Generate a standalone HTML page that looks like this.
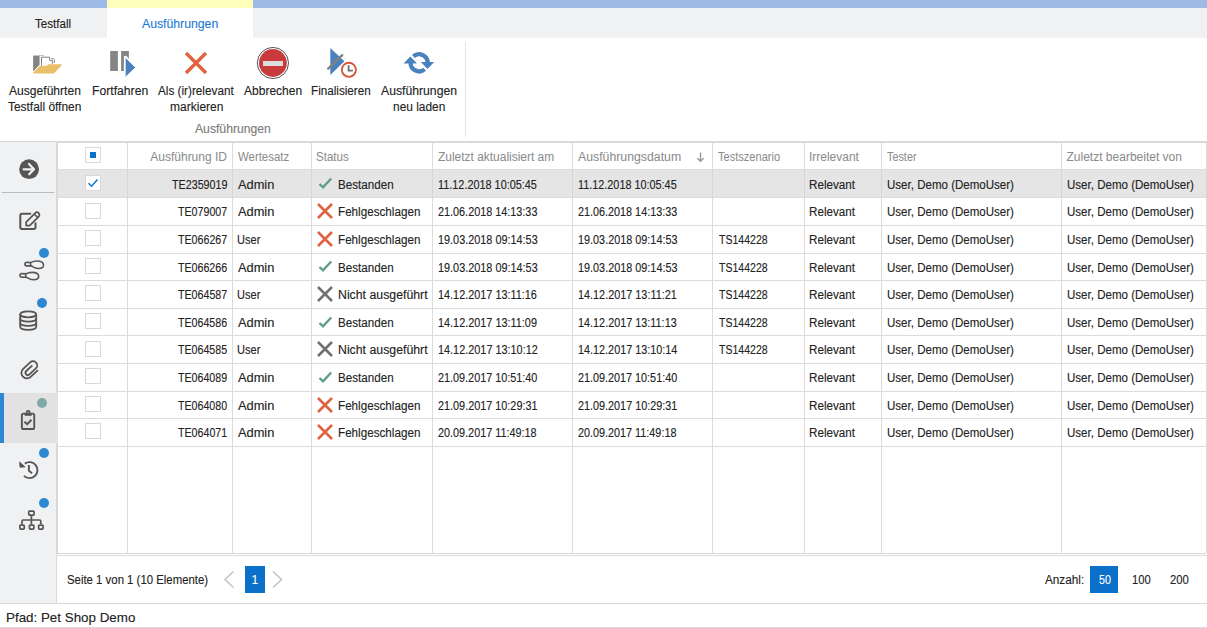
<!DOCTYPE html>
<html><head><meta charset="utf-8"><style>
html,body{margin:0;padding:0;}
body{width:1207px;height:628px;overflow:hidden;position:relative;background:#fff;font-family:"Liberation Sans",sans-serif;}
body>div{position:absolute;box-sizing:content-box;}
.t{white-space:pre;line-height:16px;transform-origin:0 0;-webkit-text-stroke:0.12px currentColor;}
</style></head><body>
<div style="left:0px;top:0px;width:1207px;height:8px;background:#9EBAE6;"></div>
<div style="left:107px;top:0px;width:146px;height:8px;background:#FFFFBB;"></div>
<div style="left:0px;top:8px;width:1207px;height:30px;background:#F0F1F3;"></div>
<div style="left:107px;top:8px;width:146px;height:30px;background:#FFFFFF;"></div>
<div class="t" style="left:35.04px;top:15.84px;font-size:12px;color:#222;transform:scaleX(0.9653);">Testfall</div>
<div class="t" style="left:142.18px;top:15.84px;font-size:12px;color:#1C7CD5;transform:scaleX(1.0200);">Ausführungen</div>
<div style="left:0px;top:141px;width:1207px;height:1px;background:#D9D9D9;"></div>
<div style="left:465px;top:42px;width:1px;height:95px;background:#E3E3E3;"></div>
<div class="t" style="left:9.43px;top:82.84px;font-size:12px;color:#222;transform:scaleX(1.0073);">Ausgeführten</div>
<div class="t" style="left:8.43px;top:98.84px;font-size:12px;color:#222;transform:scaleX(0.9929);">Testfall öffnen</div>
<div class="t" style="left:92.30px;top:82.84px;font-size:12px;color:#222;transform:scaleX(1.0150);">Fortfahren</div>
<div class="t" style="left:158.28px;top:82.84px;font-size:12px;color:#222;transform:scaleX(0.9788);">Als (ir)relevant</div>
<div class="t" style="left:170.10px;top:98.84px;font-size:12px;color:#222;">markieren</div>
<div class="t" style="left:244.08px;top:82.84px;font-size:12px;color:#222;">Abbrechen</div>
<div class="t" style="left:311.44px;top:82.84px;font-size:12px;color:#222;transform:scaleX(0.9732);">Finalisieren</div>
<div class="t" style="left:381.18px;top:82.84px;font-size:12px;color:#222;transform:scaleX(1.0173);">Ausführungen</div>
<div class="t" style="left:392.81px;top:98.84px;font-size:12px;color:#222;transform:scaleX(0.9933);">neu laden</div>
<div class="t" style="left:195.38px;top:120.84px;font-size:12px;color:#7A7A7A;transform:scaleX(1.0146);">Ausführungen</div>
<svg style="position:absolute;left:30px;top:50px" width="36" height="28" viewBox="0 0 36 28">
<path d="M3.9 5.4 L14.1 5.4 L14.1 6.1 L9.6 6.1 L9.6 14.7 L3.1 21.4 L3.1 6.2 Q3.1 5.4 3.9 5.4 Z" fill="#858585"/>
<path d="M11.5 15.6 L11.5 7.2 L19.6 7.2 L19.6 10.3 L22.3 10.3 L22.3 14" fill="none" stroke="#7A7A7A" stroke-width="0.95"/>
<path d="M21.5 8.3 Q23.6 8.3 24.3 9.9 L24.3 12.9" fill="none" stroke="#7A7A7A" stroke-width="0.95"/>
<path d="M3.1 23.4 L23.9 23.4 L31.9 15 Q32 14.2 31.2 14.2 L18.3 14.2 L16.7 15.8 L10 15.8 L3.1 22.8 Z" fill="#E9BF6A"/>
</svg>
<svg style="position:absolute;left:105px;top:48px" width="36" height="32" viewBox="0 0 36 32">
<rect x="5.2" y="3" width="7.7" height="20" fill="#858585"/>
<path d="M16.1 3 L23.9 3 L23.9 10.7 L21.9 8.2 L18.9 8.0 L18.9 23 L16.1 23 Z" fill="#858585"/>
<path d="M20.1 9 L30.6 19.4 L20.1 29.6 Z" fill="#4A81BF" stroke="#fff" stroke-width="1"/>
</svg>
<svg style="position:absolute;left:182px;top:49px" width="28" height="28" viewBox="0 0 28 28">
<path d="M4 4 L24 24 M24 4 L4 24" stroke="#E0623F" stroke-width="3.4" stroke-linecap="butt"/>
</svg>
<svg style="position:absolute;left:255px;top:45px" width="36" height="36" viewBox="0 0 36 36">
<circle cx="17.9" cy="18" r="15.6" fill="#fff" stroke="#555" stroke-width="1"/>
<circle cx="17.9" cy="18" r="13.9" fill="#C93A3C"/>
<rect x="8" y="16" width="20" height="5" fill="#DCDCDC"/>
</svg>
<svg style="position:absolute;left:325px;top:45px" width="36" height="36" viewBox="0 0 36 36">
<path d="M5.3 3 L19.4 16.3 L5.3 29.9 Z" fill="#4A81BF"/>
<path d="M3.2 23.6 L17.2 10.2" stroke="#838383" stroke-width="2.4" stroke-linecap="round"/>
<circle cx="23.9" cy="24.8" r="7.05" fill="#fff" stroke="#D9583A" stroke-width="1.9"/>
<path d="M23.6 20.2 L23.6 25.6 L27.9 25.6" fill="none" stroke="#707070" stroke-width="1.9"/>
</svg>
<svg style="position:absolute;left:400px;top:48px" width="38" height="30" viewBox="0 0 38 30">
<path d="M13.38 8.45 A8.55 8.55 0 0 1 27.65 14.8" fill="none" stroke="#4A81BF" stroke-width="4.3"/>
<path d="M20.8 14.1 L34.2 14.1 L27.5 21.0 Z" fill="#4A81BF"/>
<path d="M24.71 21.25 A8.55 8.55 0 0 1 10.55 14.8" fill="none" stroke="#4A81BF" stroke-width="4.3"/>
<path d="M3.6 15.5 L17 15.5 L10.3 8.6 Z" fill="#4A81BF"/>
</svg>
<div style="left:0px;top:142px;width:56px;height:461px;background:#F0F1F3;"></div>
<div style="left:56px;top:142px;width:1px;height:461px;background:#DADADA;"></div>
<div style="left:57px;top:142px;width:1px;height:411px;background:#DADADA;"></div>
<div style="left:2px;top:192px;width:52px;height:1px;background:#BBBBBB;"></div>
<div style="left:0px;top:393px;width:58px;height:50px;background:#E2E2E2;"></div>
<div style="left:0px;top:393px;width:4px;height:50px;background:#2D87D3;"></div>
<svg style="position:absolute;left:17px;top:157px" width="24" height="24" viewBox="0 0 24 24">
<circle cx="12.1" cy="12.2" r="9.9" fill="#555555"/>
<path d="M6.6 12.3 L16.6 12.3 M12 7 L17 12.2 L12.2 17.3" fill="none" stroke="#F0F0F0" stroke-width="2.2" stroke-linecap="round" stroke-linejoin="round"/>
</svg>
<svg style="position:absolute;left:12px;top:202px" width="40" height="40" viewBox="0 0 40 40">
<path d="M19.1 11.8 L10 11.8 Q8.3 11.8 8.3 13.5 L8.3 25.3 Q8.3 27 10 27 L21.8 27 Q23.5 27 23.5 25.3 L23.5 20.4" fill="none" stroke="#555555" stroke-width="2"/>
<g transform="translate(21.4,16.4) rotate(-45)">
<path d="M-7.8 -2.5 L5.0 -2.5 A2.5 2.5 0 0 1 5.0 2.5 L-7.8 2.5 L-10.2 0 Z" fill="none" stroke="#555555" stroke-width="1.7" stroke-linejoin="round"/>
<path d="M3.6 -2.5 L3.6 2.5" stroke="#555555" stroke-width="1.5"/>
</g>
</svg>
<svg style="position:absolute;left:12px;top:245px" width="40" height="40" viewBox="0 0 40 40">
<path d="M14.8 17.2 L18.6 17.6 C21 16.4 25 15.8 27.8 16.3 C31.5 17 32.2 19.8 31 22 C29.6 24 25 23.8 22.5 22.6 C21 21.9 19.8 20.9 18.6 20.9 L14.8 20.9 C12.3 20.9 12.3 17.2 14.8 17.2 Z M18.6 17.6 L18.6 20.9" fill="none" stroke="#555555" stroke-width="1.6" stroke-linejoin="round"/>
<g transform="translate(-4.9,11.3)"><path d="M14.8 17.2 L18.6 17.6 C21 16.4 25 15.8 27.8 16.3 C31.5 17 32.2 19.8 31 22 C29.6 24 25 23.8 22.5 22.6 C21 21.9 19.8 20.9 18.6 20.9 L14.8 20.9 C12.3 20.9 12.3 17.2 14.8 17.2 Z M18.6 17.6 L18.6 20.9" fill="none" stroke="#555555" stroke-width="1.6" stroke-linejoin="round"/></g>
</svg>
<svg style="position:absolute;left:16px;top:307px" width="26" height="26" viewBox="0 0 26 26">
<ellipse cx="12.2" cy="7.3" rx="8" ry="3" fill="none" stroke="#555555" stroke-width="1.8"/>
<path d="M4.2 7.3 L4.2 19.8 C4.2 23.8 20.2 23.8 20.2 19.8 L20.2 7.3" fill="none" stroke="#555555" stroke-width="1.8"/>
<path d="M4.2 11.6 C4.2 15.6 20.2 15.6 20.2 11.6 M4.2 15.8 C4.2 19.8 20.2 19.8 20.2 15.8" fill="none" stroke="#555555" stroke-width="1.8"/>
</svg>
<svg style="position:absolute;left:12px;top:350px" width="40" height="40" viewBox="0 0 40 40">
<g transform="translate(17.6,20.05) scale(1.06) translate(-17.3,-19.6) translate(6,8) rotate(-43)">
<path d="M6.0 21.6 L-3.3 21.6 A5.2 5.2 0 0 1 -3.3 11.2 L5.7 11.2 A3.95 3.95 0 0 1 5.7 19.1 L-2.55 19.1 A2.2 2.2 0 0 1 -2.55 14.7 L5.3 14.7" fill="none" stroke="#555555" stroke-width="1.7"/>
</g>
</svg>
<svg style="position:absolute;left:12px;top:400px" width="40" height="40" viewBox="0 0 40 40">
<rect x="9.85" y="13.6" width="12.4" height="15.4" rx="1.6" fill="none" stroke="#555555" stroke-width="1.9"/>
<rect x="12.7" y="13.2" width="7" height="2.6" fill="#555555"/>
<circle cx="16.2" cy="12.5" r="1.6" fill="none" stroke="#555555" stroke-width="1.6"/>
<path d="M12.4 21.7 L15.2 24.2 L19.5 19.7" fill="none" stroke="#555555" stroke-width="2"/>
</svg>
<svg style="position:absolute;left:16px;top:456px" width="28" height="28" viewBox="0 0 28 28">
<path d="M7.94 19.85 A8 8 0 1 0 8.8 7.63" fill="none" stroke="#555555" stroke-width="1.9"/>
<path d="M3.6 6.1 L4 11.2 L9.1 10.9 Z" fill="#555555" stroke="#555555" stroke-width="0.8" stroke-linejoin="round"/>
<path d="M12.9 9 L12.9 14.7 L16.1 17.2" fill="none" stroke="#555555" stroke-width="1.9"/>
</svg>
<svg style="position:absolute;left:16px;top:506px" width="30" height="28" viewBox="0 0 30 28">
<rect x="12.75" y="5.05" width="5.3" height="4.0" rx="0.8" fill="none" stroke="#555555" stroke-width="1.7"/>
<rect x="3.85" y="19.05" width="4.4" height="4.0" rx="0.8" fill="none" stroke="#555555" stroke-width="1.7"/>
<rect x="13.45" y="19.05" width="4.4" height="4.0" rx="0.8" fill="none" stroke="#555555" stroke-width="1.7"/>
<rect x="22.65" y="19.05" width="4.4" height="4.0" rx="0.8" fill="none" stroke="#555555" stroke-width="1.7"/>
<path d="M15.4 9.9 L15.4 17.9 M6 18 L6 15.2 Q6 14 7.2 14 L23.6 14 Q24.8 14 24.8 15.2 L24.8 18" fill="none" stroke="#555555" stroke-width="1.7"/>
</svg>
<div style="left:39px;top:247.5px;width:10px;height:10px;border-radius:5px;background:#2D87D3"></div>
<div style="left:37px;top:298px;width:10px;height:10px;border-radius:5px;background:#2D87D3"></div>
<div style="left:37px;top:398px;width:10px;height:10px;border-radius:5px;background:#7FA9A8"></div>
<div style="left:39px;top:448px;width:10px;height:10px;border-radius:5px;background:#2D87D3"></div>
<div style="left:39px;top:498px;width:10px;height:10px;border-radius:5px;background:#2D87D3"></div>
<div style="left:58px;top:141px;width:1149px;height:2px;background:#D9D9D9;"></div>
<div style="left:58px;top:143px;width:1148px;height:410px;background:#FFFFFF;"></div>
<div style="left:127px;top:143px;width:1px;height:410px;background:#DCDCDC;"></div>
<div style="left:232px;top:143px;width:1px;height:410px;background:#DCDCDC;"></div>
<div style="left:311px;top:143px;width:1px;height:410px;background:#DCDCDC;"></div>
<div style="left:432px;top:143px;width:1px;height:410px;background:#DCDCDC;"></div>
<div style="left:572px;top:143px;width:1px;height:410px;background:#DCDCDC;"></div>
<div style="left:712px;top:143px;width:1px;height:410px;background:#DCDCDC;"></div>
<div style="left:804px;top:143px;width:1px;height:410px;background:#DCDCDC;"></div>
<div style="left:881px;top:143px;width:1px;height:410px;background:#DCDCDC;"></div>
<div style="left:1061px;top:143px;width:1px;height:410px;background:#DCDCDC;"></div>
<div style="left:1206px;top:143px;width:1px;height:410px;background:#DCDCDC;"></div>
<div style="left:58px;top:169px;width:1148px;height:1px;background:#DCDCDC;"></div>
<div style="left:58px;top:170px;width:1148px;height:27px;background:#E5E5E5;"></div>
<div style="left:127px;top:170px;width:1px;height:27px;background:#D6D6D6;"></div>
<div style="left:232px;top:170px;width:1px;height:27px;background:#D6D6D6;"></div>
<div style="left:311px;top:170px;width:1px;height:27px;background:#D6D6D6;"></div>
<div style="left:432px;top:170px;width:1px;height:27px;background:#D6D6D6;"></div>
<div style="left:572px;top:170px;width:1px;height:27px;background:#D6D6D6;"></div>
<div style="left:712px;top:170px;width:1px;height:27px;background:#D6D6D6;"></div>
<div style="left:804px;top:170px;width:1px;height:27px;background:#D6D6D6;"></div>
<div style="left:881px;top:170px;width:1px;height:27px;background:#D6D6D6;"></div>
<div style="left:1061px;top:170px;width:1px;height:27px;background:#D6D6D6;"></div>
<div style="left:1206px;top:170px;width:1px;height:27px;background:#D6D6D6;"></div>
<div style="left:58px;top:197px;width:1148px;height:1px;background:#DCDCDC;"></div>
<div style="left:58px;top:225px;width:1148px;height:1px;background:#DCDCDC;"></div>
<div style="left:58px;top:253px;width:1148px;height:1px;background:#DCDCDC;"></div>
<div style="left:58px;top:280px;width:1148px;height:1px;background:#DCDCDC;"></div>
<div style="left:58px;top:308px;width:1148px;height:1px;background:#DCDCDC;"></div>
<div style="left:58px;top:335px;width:1148px;height:1px;background:#DCDCDC;"></div>
<div style="left:58px;top:363px;width:1148px;height:1px;background:#DCDCDC;"></div>
<div style="left:58px;top:391px;width:1148px;height:1px;background:#DCDCDC;"></div>
<div style="left:58px;top:418px;width:1148px;height:1px;background:#DCDCDC;"></div>
<div style="left:58px;top:446px;width:1148px;height:1px;background:#DCDCDC;"></div>
<div style="left:57px;top:553px;width:1149px;height:1px;background:#D6D6D6;"></div>
<div style="left:57px;top:555px;width:1150px;height:1px;background:#DCDCDC;"></div>
<div class="t" style="left:150.28px;top:148.84px;font-size:12px;color:#8C8C8C;-webkit-text-stroke:0.05px currentColor;">Ausführung ID</div>
<div class="t" style="left:238.25px;top:148.84px;font-size:12px;color:#8C8C8C;transform:scaleX(0.9501);-webkit-text-stroke:0.05px currentColor;">Wertesatz</div>
<div class="t" style="left:316.48px;top:148.84px;font-size:12px;color:#8C8C8C;transform:scaleX(0.9624);-webkit-text-stroke:0.05px currentColor;">Status</div>
<div class="t" style="left:437.82px;top:148.84px;font-size:12px;color:#8C8C8C;transform:scaleX(0.9954);-webkit-text-stroke:0.05px currentColor;">Zuletzt aktualisiert am</div>
<div class="t" style="left:578.28px;top:148.84px;font-size:12px;color:#8C8C8C;transform:scaleX(1.0239);-webkit-text-stroke:0.05px currentColor;">Ausführungsdatum</div>
<div class="t" style="left:718.45px;top:148.84px;font-size:12px;color:#8C8C8C;transform:scaleX(0.9216);-webkit-text-stroke:0.05px currentColor;">Testszenario</div>
<div class="t" style="left:808.89px;top:148.84px;font-size:12px;color:#8C8C8C;-webkit-text-stroke:0.05px currentColor;">Irrelevant</div>
<div class="t" style="left:887.36px;top:148.84px;font-size:12px;color:#8C8C8C;transform:scaleX(0.9034);-webkit-text-stroke:0.05px currentColor;">Tester</div>
<div class="t" style="left:1066.52px;top:148.84px;font-size:12px;color:#8C8C8C;-webkit-text-stroke:0.05px currentColor;">Zuletzt bearbeitet von</div>
<svg style="position:absolute;left:695px;top:150px" width="12" height="14" viewBox="0 0 12 14"><path d="M5.5 2.5 L5.5 11.2 M2.4 8.2 L5.5 11.3 L8.6 8.2" fill="none" stroke="#999999" stroke-width="1.4"/></svg>
<div style="left:85px;top:147px;width:14px;height:14px;border:1px solid #DADADA;background:#fff"></div>
<div style="left:90px;top:152px;width:6px;height:6px;background:#0A70C8;"></div>
<div style="left:85px;top:175px;width:14px;height:14px;border:1px solid #D8D8D8;background:#fff"></div>
<svg style="position:absolute;left:85px;top:175px" width="16" height="16" viewBox="0 0 16 16"><path d="M3.5 8.2 L6.6 11.2 L12.5 4.5" fill="none" stroke="#1173D4" stroke-width="1.5"/></svg>
<div class="t" style="left:171.86px;top:176.84px;font-size:12px;color:#222222;transform:scaleX(0.8936);">TE2359019</div>
<div class="t" style="left:238.17px;top:176.84px;font-size:12px;color:#222222;transform:scaleX(1.0689);">Admin</div>
<svg style="position:absolute;left:317px;top:175px" width="16" height="16" viewBox="0 0 16 16"><path d="M2.5 9 L6 12.3 L14.2 3.5" fill="none" stroke="#5E9E88" stroke-width="2.4"/></svg>
<div class="t" style="left:337.65px;top:176.84px;font-size:12px;color:#222222;transform:scaleX(0.9691);">Bestanden</div>
<div class="t" style="left:438.47px;top:176.84px;font-size:12px;color:#222222;transform:scaleX(0.9054);">11.12.2018 10:05:45</div>
<div class="t" style="left:578.47px;top:176.84px;font-size:12px;color:#222222;transform:scaleX(0.9035);">11.12.2018 10:05:45</div>
<div class="t" style="left:809.14px;top:176.84px;font-size:12px;color:#222222;transform:scaleX(0.9722);">Relevant</div>
<div class="t" style="left:886.71px;top:176.84px;font-size:12px;color:#222222;transform:scaleX(0.9617);">User, Demo (DemoUser)</div>
<div class="t" style="left:1066.61px;top:176.84px;font-size:12px;color:#222222;transform:scaleX(0.9617);">User, Demo (DemoUser)</div>
<div style="left:85px;top:203px;width:14px;height:14px;border:1px solid #D8D8D8;background:#fff"></div>
<div class="t" style="left:178.16px;top:203.84px;font-size:12px;color:#222222;transform:scaleX(0.8880);">TE079007</div>
<div class="t" style="left:238.17px;top:203.84px;font-size:12px;color:#222222;transform:scaleX(1.0689);">Admin</div>
<svg style="position:absolute;left:316px;top:202px" width="18" height="18" viewBox="0 0 18 18"><path d="M2 2 L16 16 M16 2 L2 16" stroke="#E0623F" stroke-width="2.6"/></svg>
<div class="t" style="left:337.64px;top:203.84px;font-size:12px;color:#222222;transform:scaleX(0.9727);">Fehlgeschlagen</div>
<div class="t" style="left:437.76px;top:203.84px;font-size:12px;color:#222222;transform:scaleX(0.9030);">21.06.2018 14:13:33</div>
<div class="t" style="left:577.76px;top:203.84px;font-size:12px;color:#222222;transform:scaleX(0.9011);">21.06.2018 14:13:33</div>
<div class="t" style="left:809.14px;top:203.84px;font-size:12px;color:#222222;transform:scaleX(0.9722);">Relevant</div>
<div class="t" style="left:886.71px;top:203.84px;font-size:12px;color:#222222;transform:scaleX(0.9617);">User, Demo (DemoUser)</div>
<div class="t" style="left:1066.61px;top:203.84px;font-size:12px;color:#222222;transform:scaleX(0.9617);">User, Demo (DemoUser)</div>
<div style="left:85px;top:230px;width:14px;height:14px;border:1px solid #D8D8D8;background:#fff"></div>
<div class="t" style="left:178.16px;top:231.84px;font-size:12px;color:#222222;transform:scaleX(0.8880);">TE066267</div>
<div class="t" style="left:237.35px;top:231.84px;font-size:12px;color:#222222;transform:scaleX(0.9211);">User</div>
<svg style="position:absolute;left:316px;top:230px" width="18" height="18" viewBox="0 0 18 18"><path d="M2 2 L16 16 M16 2 L2 16" stroke="#E0623F" stroke-width="2.6"/></svg>
<div class="t" style="left:337.64px;top:231.84px;font-size:12px;color:#222222;transform:scaleX(0.9727);">Fehlgeschlagen</div>
<div class="t" style="left:438.47px;top:231.84px;font-size:12px;color:#222222;transform:scaleX(0.9056);">19.03.2018 09:14:53</div>
<div class="t" style="left:578.47px;top:231.84px;font-size:12px;color:#222222;transform:scaleX(0.9037);">19.03.2018 09:14:53</div>
<div class="t" style="left:718.96px;top:231.84px;font-size:12px;color:#222222;transform:scaleX(0.8775);">TS144228</div>
<div class="t" style="left:809.14px;top:231.84px;font-size:12px;color:#222222;transform:scaleX(0.9722);">Relevant</div>
<div class="t" style="left:886.71px;top:231.84px;font-size:12px;color:#222222;transform:scaleX(0.9617);">User, Demo (DemoUser)</div>
<div class="t" style="left:1066.61px;top:231.84px;font-size:12px;color:#222222;transform:scaleX(0.9617);">User, Demo (DemoUser)</div>
<div style="left:85px;top:258px;width:14px;height:14px;border:1px solid #D8D8D8;background:#fff"></div>
<div class="t" style="left:178.16px;top:259.84px;font-size:12px;color:#222222;transform:scaleX(0.8868);">TE066266</div>
<div class="t" style="left:238.17px;top:259.84px;font-size:12px;color:#222222;transform:scaleX(1.0689);">Admin</div>
<svg style="position:absolute;left:317px;top:258px" width="16" height="16" viewBox="0 0 16 16"><path d="M2.5 9 L6 12.3 L14.2 3.5" fill="none" stroke="#5E9E88" stroke-width="2.4"/></svg>
<div class="t" style="left:337.65px;top:259.84px;font-size:12px;color:#222222;transform:scaleX(0.9691);">Bestanden</div>
<div class="t" style="left:438.47px;top:259.84px;font-size:12px;color:#222222;transform:scaleX(0.9056);">19.03.2018 09:14:53</div>
<div class="t" style="left:578.47px;top:259.84px;font-size:12px;color:#222222;transform:scaleX(0.9037);">19.03.2018 09:14:53</div>
<div class="t" style="left:718.96px;top:259.84px;font-size:12px;color:#222222;transform:scaleX(0.8775);">TS144228</div>
<div class="t" style="left:809.14px;top:259.84px;font-size:12px;color:#222222;transform:scaleX(0.9722);">Relevant</div>
<div class="t" style="left:886.71px;top:259.84px;font-size:12px;color:#222222;transform:scaleX(0.9617);">User, Demo (DemoUser)</div>
<div class="t" style="left:1066.61px;top:259.84px;font-size:12px;color:#222222;transform:scaleX(0.9617);">User, Demo (DemoUser)</div>
<div style="left:85px;top:285px;width:14px;height:14px;border:1px solid #D8D8D8;background:#fff"></div>
<div class="t" style="left:178.16px;top:286.84px;font-size:12px;color:#222222;transform:scaleX(0.8880);">TE064587</div>
<div class="t" style="left:237.35px;top:286.84px;font-size:12px;color:#222222;transform:scaleX(0.9211);">User</div>
<svg style="position:absolute;left:316px;top:285px" width="18" height="18" viewBox="0 0 18 18"><path d="M2 2 L16 16 M16 2 L2 16" stroke="#707070" stroke-width="2.6"/></svg>
<div class="t" style="left:337.59px;top:286.84px;font-size:12px;color:#222222;transform:scaleX(1.0254);">Nicht ausgeführt</div>
<div class="t" style="left:438.47px;top:286.84px;font-size:12px;color:#222222;transform:scaleX(0.9056);">14.12.2017 13:11:16</div>
<div class="t" style="left:578.47px;top:286.84px;font-size:12px;color:#222222;transform:scaleX(0.9042);">14.12.2017 13:11:21</div>
<div class="t" style="left:718.96px;top:286.84px;font-size:12px;color:#222222;transform:scaleX(0.8775);">TS144228</div>
<div class="t" style="left:809.14px;top:286.84px;font-size:12px;color:#222222;transform:scaleX(0.9722);">Relevant</div>
<div class="t" style="left:886.71px;top:286.84px;font-size:12px;color:#222222;transform:scaleX(0.9617);">User, Demo (DemoUser)</div>
<div class="t" style="left:1066.61px;top:286.84px;font-size:12px;color:#222222;transform:scaleX(0.9617);">User, Demo (DemoUser)</div>
<div style="left:85px;top:313px;width:14px;height:14px;border:1px solid #D8D8D8;background:#fff"></div>
<div class="t" style="left:178.16px;top:314.84px;font-size:12px;color:#222222;transform:scaleX(0.8868);">TE064586</div>
<div class="t" style="left:238.17px;top:314.84px;font-size:12px;color:#222222;transform:scaleX(1.0689);">Admin</div>
<svg style="position:absolute;left:317px;top:314px" width="16" height="16" viewBox="0 0 16 16"><path d="M2.5 9 L6 12.3 L14.2 3.5" fill="none" stroke="#5E9E88" stroke-width="2.4"/></svg>
<div class="t" style="left:337.65px;top:314.84px;font-size:12px;color:#222222;transform:scaleX(0.9691);">Bestanden</div>
<div class="t" style="left:438.47px;top:314.84px;font-size:12px;color:#222222;transform:scaleX(0.9059);">14.12.2017 13:11:09</div>
<div class="t" style="left:578.47px;top:314.84px;font-size:12px;color:#222222;transform:scaleX(0.9037);">14.12.2017 13:11:13</div>
<div class="t" style="left:718.96px;top:314.84px;font-size:12px;color:#222222;transform:scaleX(0.8775);">TS144228</div>
<div class="t" style="left:809.14px;top:314.84px;font-size:12px;color:#222222;transform:scaleX(0.9722);">Relevant</div>
<div class="t" style="left:886.71px;top:314.84px;font-size:12px;color:#222222;transform:scaleX(0.9617);">User, Demo (DemoUser)</div>
<div class="t" style="left:1066.61px;top:314.84px;font-size:12px;color:#222222;transform:scaleX(0.9617);">User, Demo (DemoUser)</div>
<div style="left:85px;top:341px;width:14px;height:14px;border:1px solid #D8D8D8;background:#fff"></div>
<div class="t" style="left:178.16px;top:341.84px;font-size:12px;color:#222222;transform:scaleX(0.8864);">TE064585</div>
<div class="t" style="left:237.35px;top:341.84px;font-size:12px;color:#222222;transform:scaleX(0.9211);">User</div>
<svg style="position:absolute;left:316px;top:340px" width="18" height="18" viewBox="0 0 18 18"><path d="M2 2 L16 16 M16 2 L2 16" stroke="#707070" stroke-width="2.6"/></svg>
<div class="t" style="left:337.59px;top:341.84px;font-size:12px;color:#222222;transform:scaleX(1.0254);">Nicht ausgeführt</div>
<div class="t" style="left:438.47px;top:341.84px;font-size:12px;color:#222222;transform:scaleX(0.9062);">14.12.2017 13:10:12</div>
<div class="t" style="left:578.48px;top:341.84px;font-size:12px;color:#222222;transform:scaleX(0.9023);">14.12.2017 13:10:14</div>
<div class="t" style="left:718.96px;top:341.84px;font-size:12px;color:#222222;transform:scaleX(0.8775);">TS144228</div>
<div class="t" style="left:809.14px;top:341.84px;font-size:12px;color:#222222;transform:scaleX(0.9722);">Relevant</div>
<div class="t" style="left:886.71px;top:341.84px;font-size:12px;color:#222222;transform:scaleX(0.9617);">User, Demo (DemoUser)</div>
<div class="t" style="left:1066.61px;top:341.84px;font-size:12px;color:#222222;transform:scaleX(0.9617);">User, Demo (DemoUser)</div>
<div style="left:85px;top:368px;width:14px;height:14px;border:1px solid #D8D8D8;background:#fff"></div>
<div class="t" style="left:178.16px;top:369.84px;font-size:12px;color:#222222;transform:scaleX(0.8874);">TE064089</div>
<div class="t" style="left:238.17px;top:369.84px;font-size:12px;color:#222222;transform:scaleX(1.0689);">Admin</div>
<svg style="position:absolute;left:317px;top:369px" width="16" height="16" viewBox="0 0 16 16"><path d="M2.5 9 L6 12.3 L14.2 3.5" fill="none" stroke="#5E9E88" stroke-width="2.4"/></svg>
<div class="t" style="left:337.65px;top:369.84px;font-size:12px;color:#222222;transform:scaleX(0.9691);">Bestanden</div>
<div class="t" style="left:437.76px;top:369.84px;font-size:12px;color:#222222;transform:scaleX(0.9025);">21.09.2017 10:51:40</div>
<div class="t" style="left:577.76px;top:369.84px;font-size:12px;color:#222222;transform:scaleX(0.9007);">21.09.2017 10:51:40</div>
<div class="t" style="left:809.14px;top:369.84px;font-size:12px;color:#222222;transform:scaleX(0.9722);">Relevant</div>
<div class="t" style="left:886.71px;top:369.84px;font-size:12px;color:#222222;transform:scaleX(0.9617);">User, Demo (DemoUser)</div>
<div class="t" style="left:1066.61px;top:369.84px;font-size:12px;color:#222222;transform:scaleX(0.9617);">User, Demo (DemoUser)</div>
<div style="left:85px;top:396px;width:14px;height:14px;border:1px solid #D8D8D8;background:#fff"></div>
<div class="t" style="left:178.16px;top:397.84px;font-size:12px;color:#222222;transform:scaleX(0.8858);">TE064080</div>
<div class="t" style="left:238.17px;top:397.84px;font-size:12px;color:#222222;transform:scaleX(1.0689);">Admin</div>
<svg style="position:absolute;left:316px;top:396px" width="18" height="18" viewBox="0 0 18 18"><path d="M2 2 L16 16 M16 2 L2 16" stroke="#E0623F" stroke-width="2.6"/></svg>
<div class="t" style="left:337.64px;top:397.84px;font-size:12px;color:#222222;transform:scaleX(0.9727);">Fehlgeschlagen</div>
<div class="t" style="left:437.75px;top:397.84px;font-size:12px;color:#222222;transform:scaleX(0.9035);">21.09.2017 10:29:31</div>
<div class="t" style="left:577.76px;top:397.84px;font-size:12px;color:#222222;transform:scaleX(0.9016);">21.09.2017 10:29:31</div>
<div class="t" style="left:809.14px;top:397.84px;font-size:12px;color:#222222;transform:scaleX(0.9722);">Relevant</div>
<div class="t" style="left:886.71px;top:397.84px;font-size:12px;color:#222222;transform:scaleX(0.9617);">User, Demo (DemoUser)</div>
<div class="t" style="left:1066.61px;top:397.84px;font-size:12px;color:#222222;transform:scaleX(0.9617);">User, Demo (DemoUser)</div>
<div style="left:85px;top:423px;width:14px;height:14px;border:1px solid #D8D8D8;background:#fff"></div>
<div class="t" style="left:178.16px;top:424.84px;font-size:12px;color:#222222;transform:scaleX(0.8877);">TE064071</div>
<div class="t" style="left:238.17px;top:424.84px;font-size:12px;color:#222222;transform:scaleX(1.0689);">Admin</div>
<svg style="position:absolute;left:316px;top:423px" width="18" height="18" viewBox="0 0 18 18"><path d="M2 2 L16 16 M16 2 L2 16" stroke="#E0623F" stroke-width="2.6"/></svg>
<div class="t" style="left:337.64px;top:424.84px;font-size:12px;color:#222222;transform:scaleX(0.9727);">Fehlgeschlagen</div>
<div class="t" style="left:437.76px;top:424.84px;font-size:12px;color:#222222;transform:scaleX(0.9029);">20.09.2017 11:49:18</div>
<div class="t" style="left:577.76px;top:424.84px;font-size:12px;color:#222222;transform:scaleX(0.9011);">20.09.2017 11:49:18</div>
<div class="t" style="left:809.14px;top:424.84px;font-size:12px;color:#222222;transform:scaleX(0.9722);">Relevant</div>
<div class="t" style="left:886.71px;top:424.84px;font-size:12px;color:#222222;transform:scaleX(0.9617);">User, Demo (DemoUser)</div>
<div class="t" style="left:1066.61px;top:424.84px;font-size:12px;color:#222222;transform:scaleX(0.9617);">User, Demo (DemoUser)</div>
<div style="left:57px;top:556px;width:1150px;height:47px;background:#FFFFFF;"></div>
<div class="t" style="left:66.78px;top:571.84px;font-size:12px;color:#222222;transform:scaleX(0.9487);">Seite 1 von 1 (10 Elemente)</div>
<svg style="position:absolute;left:220px;top:568px" width="18" height="24" viewBox="0 0 18 24"><path d="M13.5 3.5 L5 11.5 L13.5 19.5" fill="none" stroke="#C4C4C4" stroke-width="1.6"/></svg>
<div style="left:245px;top:566px;width:20px;height:27px;background:#0A70C9;"></div>
<div class="t" style="left:251.50px;top:571.84px;font-size:12px;color:#FFFFFF;">1</div>
<svg style="position:absolute;left:268px;top:568px" width="18" height="24" viewBox="0 0 18 24"><path d="M5 3.5 L13.5 11.5 L5 19.5" fill="none" stroke="#C4C4C4" stroke-width="1.6"/></svg>
<div class="t" style="left:1045.38px;top:571.84px;font-size:12px;color:#222222;transform:scaleX(0.9793);">Anzahl:</div>
<div style="left:1090px;top:566px;width:28px;height:27px;background:#0A70C9;"></div>
<div class="t" style="left:1099.17px;top:571.84px;font-size:12px;color:#FFFFFF;transform:scaleX(0.8872);">50</div>
<div class="t" style="left:1131.75px;top:571.84px;font-size:12px;color:#222222;transform:scaleX(0.9335);">100</div>
<div class="t" style="left:1170.43px;top:571.84px;font-size:12px;color:#222222;transform:scaleX(0.9394);">200</div>
<div style="left:0px;top:603px;width:1207px;height:1px;background:#D9D9D9;"></div>
<div style="left:0px;top:604px;width:1207px;height:23px;background:#FFFFFF;"></div>
<div style="left:0px;top:627px;width:1207px;height:1px;background:#D9D9D9;"></div>
<div class="t" style="left:6.30px;top:609.50px;font-size:13px;color:#222222;transform:scaleX(1.0288);">Pfad: Pet Shop Demo</div>
</body></html>
